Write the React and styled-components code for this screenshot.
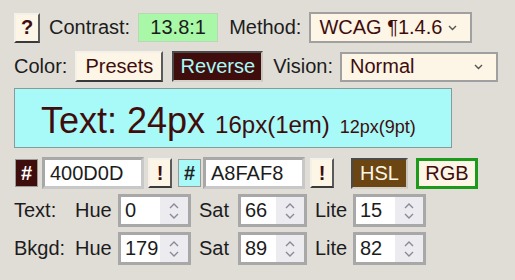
import styled, { createGlobalStyle, css } from "styled-components";

const Global = createGlobalStyle`
  body {
    margin: 0;
    background: #e0ddd7;
    font-family: "Liberation Sans", Arial, sans-serif;
    color: #1c1c1c;
  }
`;

const Page = styled.div`
  padding: 12px 14px;
  display: flex;
  flex-direction: column;
`;

const Row = styled.div`
  display: flex;
  align-items: center;
  height: ${(p) => p.h || 31}px;
  margin-bottom: ${(p) => p.mb || 0}px;
`;

const Label = styled.span`
  font-size: 20px;
  margin: 0 ${(p) => p.mr ?? 8}px 0 ${(p) => p.ml ?? 0}px;
  width: ${(p) => (p.w ? p.w + "px" : "auto")};
  white-space: nowrap;
`;

const outset = css`
  border: 2px solid;
  border-color: #f4f1ea #5a5a5a #3a3a3a #f4f1ea;
`;

const Button = styled.button`
  box-sizing: border-box;
  font-family: inherit;
  font-size: 20px;
  height: ${(p) => p.h || 31}px;
  width: ${(p) => p.w}px;
  padding: 0;
  margin-right: ${(p) => p.mr || 0}px;
  background: ${(p) => p.bg || "#fdf5e6"};
  color: ${(p) => p.fg || "#400d0d"};
  font-weight: ${(p) => (p.bold ? 700 : 400)};
  ${outset}
  ${(p) =>
    p.sunk &&
    css`
      border-color: #4a4a4a #c8c5bf #d4d1cb #4a4a4a;
    `}
  ${(p) =>
    p.green &&
    css`
      border: 3px solid #1c9a1c;
    `}
`;

const ContrastBox = styled.span`
  display: inline-flex;
  align-items: center;
  justify-content: center;
  width: 78px;
  height: 27px;
  background: #a8f8a8;
  border: 1px solid #b9d6b9;
  font-size: 20px;
  margin-right: 11px;
`;

const Select = styled.div`
  display: flex;
  align-items: center;
  justify-content: space-between;
  box-sizing: border-box;
  width: ${(p) => p.w}px;
  height: ${(p) => p.h || 31}px;
  padding: 0 12px 0 8px;
  background: #fdf5e6;
  border: 2px solid #a0a0a0;
  color: #400d0d;
  font-size: 20px;
`;

const Preview = styled.div`
  box-sizing: border-box;
  width: 438px;
  height: 60px;
  margin: 6px 0 9px;
  background: #a8faf8;
  border: 1px solid #8a9a9a;
  color: #400d0d;
  display: flex;
  align-items: baseline;
  padding: 14px 0 0 26px;
  gap: 10px;
`;

const Sized = styled.span`
  font-size: ${(p) => p.size}px;
  line-height: 1;
`;

const HashBox = styled.span`
  display: inline-flex;
  align-items: center;
  justify-content: center;
  box-sizing: border-box;
  width: 23px;
  height: 28px;
  margin: 0 ${(p) => p.mr ?? 4}px 0 ${(p) => p.ml || 0}px;
  background: ${(p) => p.bg};
  color: ${(p) => p.fg};
  border: 1px solid #9a9a9a;
  font-size: 20px;
  font-weight: 700;
`;

const HexInput = styled.div`
  box-sizing: border-box;
  width: 102px;
  height: 32px;
  margin-right: ${(p) => p.mr ?? 4}px;
  background: #fff;
  border: 3px solid #a8a8a8;
  border-right-color: #c8c8c8;
  border-bottom-color: #c8c8c8;
  font-size: 20px;
  padding: 2px 0 0 5px;
`;

const NumField = styled.div`
  display: flex;
  box-sizing: border-box;
  width: ${(p) => p.w}px;
  height: 33px;
  margin-right: 8px;
  background: #fff;
  border: 3px solid #a8a8a8;
  font-size: 20px;
`;

const NumValue = styled.span`
  flex: 1;
  padding: 2px 0 0 4px;
`;

const Spinner = styled.span`
  width: 28px;
  background: #ebebf0;
  display: flex;
  align-items: center;
  justify-content: center;
`;

const Chevron = () => (
  <svg width="11" height="7" viewBox="0 0 11 7">
    <path d="M2 2l3.5 3.5L9 2" fill="none" stroke="#555" strokeWidth="1.4" />
  </svg>
);

const Updown = () => (
  <Spinner>
    <svg width="12" height="20" viewBox="0 0 12 20">
      <path d="M2 7l4-4 4 4M2 13l4 4 4-4" fill="none" stroke="#8a8a96" strokeWidth="1.4" />
    </svg>
  </Spinner>
);

const HslRow = ({ name, h, s, l }) => (
  <Row h={33} mb={5}>
    <Label w={61} mr={0}>{name}</Label>
    <Label w={43} mr={0}>Hue</Label>
    <NumField w={73}>
      <NumValue>{h}</NumValue>
      <Updown />
    </NumField>
    <Label w={39} mr={0}>Sat</Label>
    <NumField w={69}>
      <NumValue>{s}</NumValue>
      <Updown />
    </NumField>
    <Label w={38} mr={0}>Lite</Label>
    <NumField w={73}>
      <NumValue>{l}</NumValue>
      <Updown />
    </NumField>
  </Row>
);

export default function App() {
  return (
    <Page>
      <Global />
      <Row mb={8}>
        <Button w={26} h={30} bold mr={9}>?</Button>
        <Label>Contrast:</Label>
        <ContrastBox>13.8:1</ContrastBox>
        <Label>Method:</Label>
        <Select w={163}>
          WCAG ¶1.4.6
          <Chevron />
        </Select>
      </Row>
      <Row mb={0}>
        <Label>Color:</Label>
        <Button w={88} mr={9}>Presets</Button>
        <Button w={91} mr={10} bg="#400d0d" fg="#a8faf8" sunk>Reverse</Button>
        <Label mr={7}>Vision:</Label>
        <Select w={158} h={30}>
          Normal
          <Chevron />
        </Select>
      </Row>
      <Preview>
        <Sized size={36}>Text: 24px</Sized>
        <Sized size={24}>16px(1em)</Sized>
        <Sized size={18}>12px(9pt)</Sized>
      </Preview>
      <Row h={32} mb={5}>
        <HashBox ml={1} bg="#400d0d" fg="#fff">#</HashBox>
        <HexInput>400D0D</HexInput>
        <Button w={24} h={30} bold mr={6}>!</Button>
        <HashBox mr={2} bg="#a8faf8" fg="#222">#</HashBox>
        <HexInput mr={5}>A8FAF8</HexInput>
        <Button w={24} h={30} bold mr={17}>!</Button>
        <Button w={57} h={31} mr={8} bg="#6b4512" fg="#fdf5e6" sunk>HSL</Button>
        <Button w={62} h={31} green>RGB</Button>
      </Row>
      <HslRow name="Text:" h="0" s="66" l="15" />
      <HslRow name="Bkgd:" h="179" s="89" l="82" />
    </Page>
  );
}
